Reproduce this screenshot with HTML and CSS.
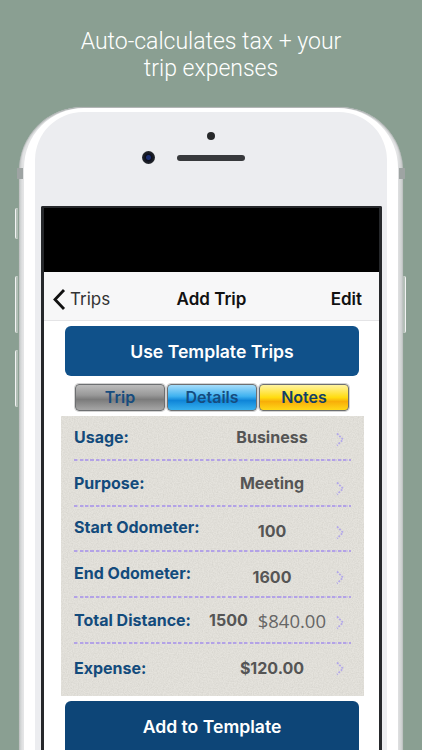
FILE: index.html
```html
<!DOCTYPE html>
<html lang="en">
<head>
<meta charset="utf-8">
<title>Add Trip</title>
<link rel="stylesheet" href="styles.css">
</head>
<body>
<div class="page">
  <h1 class="caption">Auto-calculates tax + your<br>trip expenses</h1>
  <div class="phone">
    <i class="side vol-mute"></i><i class="side vol-up"></i><i class="side vol-down"></i><i class="side power"></i>
    <i class="band band-l"></i><i class="band band-r"></i>
    <div class="bezel">
      <div class="face">
        <div class="sensors">
          <i class="dot"></i>
          <div class="cam-row"><i class="camera"></i><i class="speaker"></i></div>
        </div>
        <div class="screen">
          <div class="status"></div>
          <nav class="nav">
            <span class="back">
              <svg class="back-icon" width="14" height="23" viewBox="0 0 14 23"><path d="M12 2 L3 11.5 L12 21" fill="none" stroke="#111" stroke-width="2.8"/></svg>
              Trips
            </span>
            <span class="title">Add Trip</span>
            <span class="edit">Edit</span>
          </nav>
          <div class="content">
            <button class="action action-top">Use Template Trips</button>
            <div class="tabs">
              <span class="tab tab-grey">Trip</span>
              <span class="tab tab-blue">Details</span>
              <span class="tab tab-yellow">Notes</span>
            </div>
            <div class="panel">
              <svg class="grain" width="303" height="280"><filter id="g"><feTurbulence type="fractalNoise" baseFrequency="0.8" numOctaves="2" seed="4"/><feColorMatrix values="0 0 0 0 0.4  0 0 0 0 0.39  0 0 0 0 0.35  0 0 0 0.4 -0.12"/></filter><rect width="303" height="280" filter="url(#g)"/></svg>
              <div class="row r1"><span class="label">Usage:</span><span class="value">Business</span><svg class="chev" width="10" height="15" viewBox="0 0 10 15"><path d="M2 1.5 L8 7.5 L2 13.5"/></svg></div>
              <div class="row r2"><span class="label">Purpose:</span><span class="value">Meeting</span><svg class="chev" width="10" height="15" viewBox="0 0 10 15"><path d="M2 1.5 L8 7.5 L2 13.5"/></svg></div>
              <div class="row r3"><span class="label">Start Odometer:</span><span class="value">100</span><svg class="chev" width="10" height="15" viewBox="0 0 10 15"><path d="M2 1.5 L8 7.5 L2 13.5"/></svg></div>
              <div class="row r4"><span class="label">End Odometer:</span><span class="value">1600</span><svg class="chev" width="10" height="15" viewBox="0 0 10 15"><path d="M2 1.5 L8 7.5 L2 13.5"/></svg></div>
              <div class="row r5"><span class="label">Total Distance:</span><span class="value value-split"><b>1500</b><em>$840.00</em></span><svg class="chev" width="10" height="15" viewBox="0 0 10 15"><path d="M2 1.5 L8 7.5 L2 13.5"/></svg></div>
              <div class="row r6"><span class="label">Expense:</span><span class="value">$120.00</span><svg class="chev" width="10" height="15" viewBox="0 0 10 15"><path d="M2 1.5 L8 7.5 L2 13.5"/></svg></div>
            </div>
            <button class="action action-bottom">Add to Template</button>
          </div>
        </div>
      </div>
    </div>
  </div>
</div>
</body>
</html>
```
FILE: styles.css
```css
* { box-sizing: border-box; }
html, body { margin: 0; padding: 0; }
body { font-family: Inter, "Liberation Sans", sans-serif; }
.page { width: 422px; height: 750px; overflow: hidden; background: #8a9f92; padding-top: 28px; }
.caption { margin: 0; height: 79px; font: 300 23px/27px Roboto, sans-serif; color: #fff; text-align: center; }

.phone { position: relative; width: 384px; height: 800px; margin-left: 19px; padding: 1px 5px 0; border-radius: 64px 64px 0 0; background: linear-gradient(90deg, #c9cccc 0, #e4e5e6 4px, #e4e5e6 378px, #c9cccc 384px); box-shadow: inset 0 1px 2px #a0a5a5, 0 0 1px #a9b3ae; }
.bezel { height: 100%; padding: 4px 11px 0; border-radius: 60px 60px 0 0; background: #fff; }
.face { height: 100%; padding: 0 6px; border-radius: 48px 48px 0 0; background: #ecedf0; }
.sensors { height: 94px; display: flex; flex-direction: column; align-items: center; padding-top: 20px; }
.dot { width: 8px; height: 8px; border-radius: 50%; background: #26282a; }
.cam-row { display: flex; align-items: center; margin-top: 11px; margin-left: -35px; gap: 22px; }
.camera { width: 13px; height: 13px; border-radius: 50%; background: radial-gradient(circle, #1b2d70 0 2px, #0c0f1c 3px, #22252b 6px); }
.speaker { width: 68px; height: 6px; border-radius: 3px; background: #37393c; }

.side { position: absolute; left: -4px; width: 3px; background: #b4c0b8; border-left: 1px solid #f2f3f3; border-radius: 2px 0 0 2px; }
.vol-mute { top: 101px; height: 31px; }
.vol-up { top: 169px; height: 57px; }
.vol-down { top: 243px; height: 57px; }
.power { left: auto; right: -3px; top: 169px; height: 57px; border-left: 0; border-right: 1px solid #f2f3f3; border-radius: 0 2px 2px 0; }
.band { position: absolute; top: 61px; width: 6px; height: 11px; background: #9ea4a3; }
.band-l { left: -2px; }
.band-r { right: -2px; }

.screen { width: 341px; height: 650px; border: solid #26282b; border-width: 2px 3px 0; border-radius: 2px 2px 0 0; background: #fff; display: flex; flex-direction: column; }
.status { height: 64px; background: #000; }
.nav { height: 49px; display: grid; grid-template-columns: 1fr auto 1fr; align-items: center; padding: 6px 17px 0; background: #f7f7f8; border-bottom: 1px solid #e4e4e6; font-size: 17px; color: #111; }
.back { display: flex; align-items: center; gap: 4px; margin-left: -9px; color: #333; font-weight: 400; }
.back-icon { flex: none; }
.title { font-weight: 600; }
.edit { justify-self: end; font-weight: 600; }

.content { padding: 5px 0 0 21px; }
.action { display: block; width: 294px; height: 50px; border: 0; border-radius: 6px; color: #fff; font: 600 17.6px Inter, sans-serif; }
.action-top { background: #10518a; }
.action-bottom { height: 60px; margin-top: 5px; background: #0d4577; padding-bottom: 10px; }

.tabs { display: flex; gap: 2px; margin: 8px 0 5px 10px; }
.tab { width: 90px; height: 27px; display: flex; align-items: center; justify-content: center; padding-bottom: 2px; border: 1px solid #6d6f71; border-radius: 4px; box-shadow: 0 0 0 1px #d3d3d3; font-size: 16px; font-weight: 600; color: #164c7e; }
.tab-grey { background: linear-gradient(180deg, #bcbcbc 0, #999 40%, #7b7b7b 58%, #a6a6a6 100%); }
.tab-blue { background: linear-gradient(180deg, #a5dcfa 0, #3fb2f0 45%, #0f85d8 62%, #36b0ee 100%); }
.tab-yellow { background: linear-gradient(180deg, #fff3a0 0, #ffdc10 50%, #f8ae08 66%, #ffd818 100%); color: #123f66; }

.panel { position: relative; width: 303px; height: 280px; margin-left: -4px; padding: 0 13px; background: #e5e3dd; overflow: hidden; }
.grain { position: absolute; left: 0; top: 0; }
.row { position: relative; display: flex; align-items: center; padding-bottom: 2px; background: repeating-linear-gradient(90deg, #b3a2e6 0 3px, #cbc4e2 3px 4px, transparent 4px 5.5px) left bottom / 100% 2px no-repeat; font-size: 16px; font-weight: 700; }
.r1 { height: 45px; }
.r2 { height: 46px; }
.r3 { height: 45px; }
.r4 { height: 46px; }
.r5 { height: 46px; }
.r6 { height: 53px; background: none; }
.label { width: 125px; flex: none; color: #134b7c; white-space: nowrap; }
.value { width: 146px; flex: none; text-align: center; color: #555; }
.chev { flex: none; margin-left: -10px; }
.r1 .label, .r1 .value { padding-bottom: 2px; }
.r3 .label { padding-bottom: 4px; }
.r3 .value { padding-top: 4px; }
.r4 .label { padding-bottom: 3px; }
.r4 .value { padding-top: 6px; }
.r6 .label, .r6 .value { padding-bottom: 4px; }
.r1 .chev { margin-top: 4px; }
.r2 .chev { margin-top: 10px; }
.r3 .chev { margin-top: 7px; }
.r4 .chev { margin-top: 6px; }
.r5 .chev { margin-top: 4px; }
.r6 .chev { margin-bottom: 2px; }
.value-split { display: flex; align-items: center; gap: 10px; padding-left: 10px; white-space: nowrap; }
.value-split b { font-weight: 700; }
.value-split em { font: 400 18.5px "Open Sans", sans-serif; color: #666; }
.chev path { fill: none; stroke: #b3a8ea; stroke-width: 1.8; stroke-dasharray: 2 1.2; }
```
